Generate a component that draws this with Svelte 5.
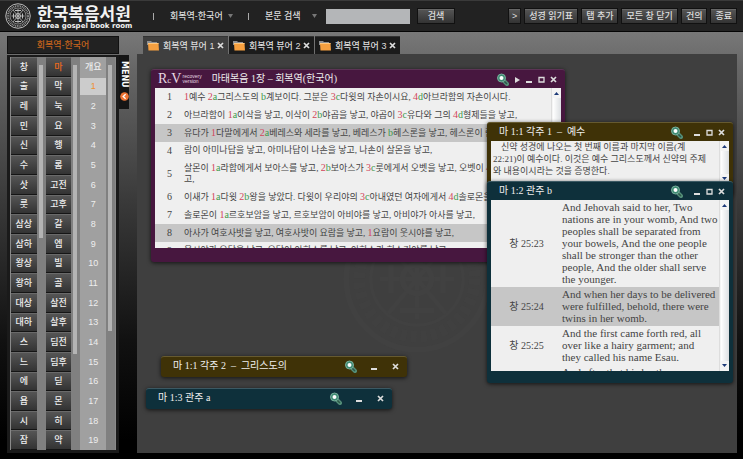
<script>
	const bibles = ['회복역-한국어'];
	const oldBooks = ['창', '출', '레', '민', '신', '수', '삿', '룻', '삼상', '삼하', '왕상', '왕하', '대상', '대하', '스', '느', '에', '욥', '시', '잠'];
	const newBooks = ['마', '막', '눅', '요', '행', '롬', '고전', '고후', '갈', '엡', '빌', '골', '살전', '살후', '딤전', '딤후', '딛', '몬', '히', '약'];
	const chapters = ['개요', ...Array.from({ length: 19 }, (_, i) => String(i + 1))];
	const actions = ['>', '성경 읽기표', '탭 추가', '모든 창 닫기', '건의', '종료'];

	const verses = [
		'1예수 2a그리스도의 b계보이다. 그분은 3c다윗의 자손이시요, 4d아브라함의 자손이시다.',
		'아브라함이 1a이삭을 낳고, 이삭이 2b야곱을 낳고, 야곱이 3c유다와 그의 4d형제들을 낳고,',
		'유다가 1다말에게서 2a베레스와 세라를 낳고, 베레스가 b헤스론을 낳고, 헤스론이 람을 낳고,',
		'람이 아미나답을 낳고, 아미나답이 나손을 낳고, 나손이 살몬을 낳고,',
		'살몬이 1a라합에게서 보아스를 낳고, 2b보아스가 3c룻에게서 오벳을 낳고, 오벳이 4d이새를 낳고,',
		'이새가 1a다윗 2b왕을 낳았다. 다윗이 우리야의 3c아내였던 여자에게서 4d솔로몬을',
		'솔로몬이 1a르호보암을 낳고, 르호보암이 아비야를 낳고, 아비야가 아사를 낳고,',
		'아사가 여호사밧을 낳고, 여호사밧이 요람을 낳고, 1요람이 웃시야를 낳고,',
		'웃시야가 요담을 낳고, 요담이 아하스를 낳고, 아하스가 히스기야를 낳고,'
	];
	const refs = [
		['창 25:23', 'And Jehovah said to her, Two nations are in your womb, And two peoples shall be separated from your bowels, And the one people shall be stronger than the other people, And the older shall serve the younger.'],
		['창 25:24', 'And when her days to be delivered were fulfilled, behold, there were twins in her womb.'],
		['창 25:25', 'And the first came forth red, all over like a hairy garment; and they\u00a0called his name Esau.'],
		['', 'And after that his brother came forth']
	];

	let tabs = $state(['회복역 뷰어 1', '회복역 뷰어 2', '회복역 뷰어 3']);
	let activeTab = $state(0);
	let book = $state('마');
	let chapter = $state('1');
	let keyword = $state('');

	// places on the desktop; h is left out for rolled-up windows
	let windows = $state([
		{ id: 'bible', tone: 'purple', title: '마태복음 1장 – 회복역(한국어)', x: 14, y: 15, w: 414, h: 193 },
		{ id: 'note', tone: 'olive', title: '마 1:1 각주 1  –  예수', x: 350, y: 68, w: 246, h: 74 },
		{ id: 'cross', tone: 'teal', title: '마 1:2 관주 b', x: 350, y: 127, w: 246, h: 202 },
		{ id: 'note2', tone: 'olive', title: '마 1:1 각주 2  –  그리스도의', x: 24, y: 302, w: 246 },
		{ id: 'cross2', tone: 'teal', title: '마 1:3 관주 a', x: 9, y: 334, w: 246 }
	]);

	function closeTab(i) {
		tabs.splice(i, 1);
		activeTab = 0;
	}
	function closeWindow(id) {
		windows = windows.filter((w) => w.id !== id);
	}
	function marks(text) {
		return text.split(/(\d|[a-d])/);
	}
</script>

{#snippet cross()}
	<svg width="7" height="7" viewBox="0 0 7 7"><path d="M1 1l5 5M6 1l-5 5" stroke="currentColor" stroke-width="1.7" /></svg>
{/snippet}

{#snippet seal(size)}
	<svg width={size} height={size} viewBox="0 0 52 52" fill="none" stroke="currentColor" aria-hidden="true">
		<circle cx="26" cy="26" r="24.5" stroke-width="2" />
		<circle cx="26" cy="26" r="20" stroke-width="4" stroke-dasharray="2 1.5" opacity="0.7" />
		<circle cx="26" cy="26" r="16" stroke-width="1.2" />
		<path d="M16 14l20 24M36 14L16 38M26 12v28M13 26h26" stroke-width="1.6" />
		<circle cx="26" cy="26" r="5" stroke-width="2" />
		<path d="M17 21v10M35 21v10M20 15h12M20 37h12" stroke-width="2" />
	</svg>
{/snippet}

{#snippet scrollbar()}
	<div class="scroll">
		<svg width="5" height="3" viewBox="0 0 5 3"><path d="M0 3L2.5 0 5 3z" fill="#1d3a78" /></svg>
		<span class="thumb"></span>
		<svg width="5" height="3" viewBox="0 0 5 3"><path d="M0 0L2.5 3 5 0z" fill="#1d3a78" /></svg>
	</div>
{/snippet}

<div class="app">
	<header>
		<a class="logo" href="/">
			{@render seal(26)}
			<span class="name">
				<strong>한국복음서원</strong>
				<small>korea gospel book room</small>
			</span>
		</a>
		<i class="sep"></i>
		<label class="pick">
			<select aria-label="역본">
				{#each bibles as b}<option>{b}</option>{/each}
			</select>
			<svg width="5" height="4" viewBox="0 0 5 4"><path d="M0 0h5L2.5 4z" fill="#777" /></svg>
		</label>
		<i class="sep"></i>
		<form onsubmit={(e) => e.preventDefault()}>
			<label class="pick wide">
				<select aria-label="검색 종류"><option>본문 검색</option></select>
				<svg width="5" height="4" viewBox="0 0 5 4"><path d="M0 0h5L2.5 4z" fill="#777" /></svg>
			</label>
			<input type="text" aria-label="검색어" bind:value={keyword} />
			<button class="btn search">검색</button>
		</form>
		<nav>
			{#each actions as a}<button class="btn">{a}</button>{/each}
		</nav>
	</header>

	<main>
		<aside>
			<h2>회복역-한국어</h2>
			<div class="books">
				<div class="col">
					{#each oldBooks as b}
						<button class:on={book === b} onclick={() => (book = b)}>{b}</button>
					{/each}
				</div>
				<div class="track"><span class="short"></span></div>
				<div class="col">
					{#each newBooks as b}
						<button class:on={book === b} onclick={() => (book = b)}>{b}</button>
					{/each}
				</div>
				<div class="track"><span class="long"></span></div>
				<div class="col nums">
					{#each chapters as c}
						<button class:on={chapter === c} onclick={() => (chapter = c)}>{c}</button>
					{/each}
				</div>
				<div class="track"><span class="mid"></span></div>
			</div>
		</aside>
		<button class="menu">
			<span>MENU</span>
			<svg width="9" height="9" viewBox="0 0 9 9">
				<circle cx="4.5" cy="4.5" r="4.3" fill="#ee7434" />
				<path d="M5.6 2.3L3.2 4.5l2.4 2.2" fill="none" stroke="#fff" stroke-width="1.3" />
			</svg>
		</button>

		<div class="work">
			<div class="tabs">
				{#each tabs as t, i}
					<div class="tab" class:active={activeTab === i}>
						<button class="pickTab" onclick={() => (activeTab = i)}>
							<svg width="12" height="11" viewBox="0 0 12 11">
								<path d="M0 1h4l1 1h5v3H0z" fill="#8d8f92" />
								<path d="M1 3h10.500l.5 7.500H1.500z" fill="#f6a040" />
								<path d="M1 3.500h10.500" stroke="#ffc77d" />
							</svg>
							{t}
						</button>
						<button class="x" aria-label="탭 닫기" onclick={() => closeTab(i)}>{@render cross()}</button>
					</div>
				{/each}
			</div>

			<div class="desktop">
				<div class="mark">{@render seal(150)}</div>
				{#each windows as w (w.id)}
					<section
						class="win {w.tone}"
						class:rolled={!w.h}
						style:left="{w.x}px"
						style:top="{w.y}px"
						style:width="{w.w}px"
						style:height={w.h ? w.h + 'px' : null}
					>
						<div class="bar">
							{#if w.id === 'bible'}
								<span class="rcv"><b>R<i>c</i>V</b><small>recovery<br />version</small></span>
							{/if}
							<h3>{w.title}</h3>
							<button class="glass" aria-label="검색">
								<svg width="13" height="13" viewBox="0 0 13 13">
									<path d="M7 7l4 4" stroke="#55907a" stroke-width="4" stroke-linecap="round" />
									<path d="M8 8l3 3" stroke="#2c5748" stroke-width="1.5" />
									<circle cx="5.500" cy="5" r="4" fill="#3d8a72" stroke="#78ad9b" />
									<circle cx="5.500" cy="5" r="2" fill="#fff" />
								</svg>
							</button>
							{#if w.id === 'bible'}
								<button aria-label="다음">
									<svg width="7" height="7" viewBox="0 0 7 7"><path d="M1 1l5 3-5 3z" fill="currentColor" /></svg>
								</button>
							{/if}
							<button aria-label="최소화">
								<svg width="7" height="7" viewBox="0 0 7 7"><path d="M0 6h6" stroke="currentColor" stroke-width="2" /></svg>
							</button>
							{#if w.h}
								<button aria-label="최대화">
									<svg width="7" height="7" viewBox="0 0 7 7"><path d="M1 1.500h5v4.500H1z" fill="none" stroke="currentColor" stroke-width="1.300" /></svg>
								</button>
							{/if}
							<button aria-label="닫기" onclick={() => closeWindow(w.id)}>{@render cross()}</button>
						</div>

						{#if w.id === 'bible'}
							<div class="body">
								<div class="text">
									<table class="verses">
										<tbody>
											{#each verses as v, i}
												<tr class:hit={i === 2 || i === 7}>
													<th>{i + 1}</th>
													<td>{#each marks(v) as p, n}{#if n % 2}<a href="#note" class:num={p < 'a'}>{p}</a>{:else}{p}{/if}{/each}</td>
												</tr>
											{/each}
										</tbody>
									</table>
								</div>
								{@render scrollbar()}
							</div>
						{:else if w.id === 'note'}
							<div class="body">
								<p class="text">신약 성경에 나오는 첫 번째 이름과 마지막 이름(계 22:21)이 예수이다. 이것은 예수 그리스도께서 신약의 주제와 내용이시라는 것을 증명한다.</p>
								{@render scrollbar()}
							</div>
						{:else if w.id === 'cross'}
							<div class="body">
								<div class="text">
									<table class="refs">
										<tbody>
											{#each refs as [ref, text], i}
												<tr class:hit={i === 1}>
													<th>{ref}</th>
													<td>{text}</td>
												</tr>
											{/each}
										</tbody>
									</table>
								</div>
								{@render scrollbar()}
							</div>
						{/if}
					</section>
				{/each}
			</div>
		</div>
	</main>
</div>

<style>
	:global(body) {
		margin: 0;
		background: #000;
	}
	.app {
		display: flex;
		flex-direction: column;
		min-height: 100vh;
		font: 9px/12px 'Liberation Sans', 'Noto Sans CJK KR', sans-serif;
		color: #ddd;
		background: linear-gradient(#787878 32px, #666 70px, #3a3a3a 200px, #111 340px, #000 440px);
	}
	* {
		box-sizing: border-box;
	}
	button,
	select,
	input {
		font: inherit;
		color: inherit;
		border: 0;
		margin: 0;
		padding: 0;
		background: none;
		border-radius: 0;
	}
	button {
		cursor: pointer;
		white-space: nowrap;
	}
	svg {
		display: block;
		flex: none;
	}
	header {
		display: flex;
		align-items: center;
		height: 32px;
		padding: 0 6px 0 5px;
		background: #222;
		border-top: 1px solid #3a3a3a;
		border-bottom: 1px solid #050505;
	}
	.logo {
		display: flex;
		align-items: center;
		gap: 6px;
		width: 148px;
		color: #bdbdbd;
		text-decoration: none;
	}
	.name {
		display: flex;
		flex-direction: column;
		padding-top: 3px;
		white-space: nowrap;
		color: #f2f2f2;
	}
	.name strong {
		font-size: 17px;
		line-height: 17px;
		font-weight: 700;
	}
	.name small {
		font: bold 7px/7px 'DejaVu Sans', sans-serif;
	}
	.sep {
		width: 1px;
		height: 7px;
		background: #aaa;
	}
	.pick {
		display: flex;
		align-items: center;
		gap: 5px;
		margin: 0 15px 0 16px;
	}
	.pick.wide {
		gap: 11px;
		margin-right: 9px;
	}
	.pick select {
		appearance: none;
		font-weight: 500;
	}
	form {
		display: flex;
		align-items: center;
	}
	form input {
		width: 84px;
		height: 15px;
		padding: 0 3px;
		background: #b4b6b8;
		color: #222;
	}
	.btn {
		height: 16px;
		padding: 0 4px;
		font-weight: 500;
		background: linear-gradient(#565656, #333);
		border: 1px solid #111;
		box-shadow: inset 0 1px #666;
	}
	.btn.search {
		width: 38px;
		margin-left: 7px;
	}
	nav {
		display: flex;
		gap: 3px;
		margin-left: auto;
	}
	nav .btn:first-child {
		padding: 0 3px;
	}
	main {
		display: flex;
		flex: 1;
		align-items: flex-start;
		padding: 4px 6px 6px 7px;
	}
	aside,
	.work {
		display: flex;
		flex-direction: column;
		align-self: stretch;
	}
	aside {
		width: 112px;
	}
	h2 {
		margin: 0 0 1px;
		font-size: 9px;
		line-height: 16px;
		font-weight: 500;
		text-align: center;
		color: #c4631c;
		background: #222;
		border: 1px solid #111;
	}
	.books {
		display: flex;
		flex: 1;
		padding: 0 1px;
		background: #8a8a8a;
		border: solid #1a1a1a;
		border-width: 2px 3px 3px;
	}
	.col {
		display: flex;
		flex-direction: column;
		flex: 1;
	}
	.col button {
		flex: 1;
		min-height: 19px;
		font-weight: 500;
		background: linear-gradient(#555, #333);
		border-top: 1px solid #6a6a6a;
		border-bottom: 1px solid #151515;
		color: #eee;
	}
	.col .on {
		color: #ee6a1c;
	}
	.nums button {
		background: #a0a0a0;
		border-color: #a0a0a0;
	}
	.nums .on {
		background: #ccc;
		color: #f09030;
	}
	.track {
		width: 9px;
		padding: 8px 3px 0 2px;
		background: #808080;
	}
	.track span {
		display: block;
		background: #b4b4b4;
	}
	.short {
		height: 45%;
	}
	.long {
		height: 75%;
	}
	.mid {
		height: 69%;
	}
	.menu {
		display: flex;
		flex-direction: column;
		align-items: center;
		justify-content: space-between;
		width: 10px;
		height: 54px;
		margin: 19px 8px 0 0;
		padding: 6px 0 8px;
		background: #151515;
		color: #fff;
	}
	.menu span {
		writing-mode: vertical-rl;
		font: bold 8px/10px 'DejaVu Sans', sans-serif;
	}
	.work {
		flex: 1;
		min-width: 0;
	}
	.tabs {
		display: flex;
		gap: 1px;
		padding-left: 6px;
	}
	.tab {
		display: flex;
		align-items: center;
		justify-content: space-between;
		width: 85px;
		height: 18px;
		padding: 0 4px;
		background: #1b1b1b;
		border-top: 1px solid #333;
	}
	.tab.active {
		background: #3f3f3f;
	}
	.pickTab {
		display: flex;
		align-items: center;
		gap: 4px;
		font-weight: 500;
	}
	.desktop {
		position: relative;
		flex: 1;
		min-height: 399px;
		overflow: hidden;
		background: #3f3f3f;
	}
	.mark {
		position: absolute;
		left: 205px;
		top: 150px;
		color: #414141;
	}
	.win {
		position: absolute;
		display: flex;
		flex-direction: column;
		padding: 0 4px 12px;
		border-radius: 3px;
		border-top: 1px solid;
		box-shadow: 0 1px 4px rgba(0, 0, 0, 0.7);
		font-family: 'Liberation Serif', 'Noto Sans CJK KR', serif;
	}
	.win.rolled {
		padding-bottom: 2px;
	}
	.win.purple {
		padding-bottom: 14px;
	}
	.purple {
		background: #47173f;
		border-color: #5c3355;
	}
	.olive {
		background: #3f3207;
		border-color: #665a30;
	}
	.teal {
		background: #0e303b;
		border-color: #3c5963;
	}
	.bar {
		display: flex;
		align-items: center;
		gap: 5px;
		height: 18px;
		padding: 0 4px 0 8px;
		flex: none;
	}
	.purple .bar {
		padding-left: 3px;
	}
	.win:not(.purple, .rolled) .glass {
		margin-right: 6px;
	}
	.rolled .bar {
		gap: 14px;
	}
	h3 {
		flex: 1;
		margin: 0;
		font-size: 10px;
		font-weight: 400;
		white-space: pre;
		color: #eee;
	}
	.rcv {
		display: flex;
		align-items: center;
		gap: 1px;
		margin-right: 5px;
		color: #e5d8e2;
	}
	.rcv b {
		font-size: 14px;
		font-weight: 400;
	}
	.rcv i {
		font-size: 9px;
		font-style: normal;
	}
	.rcv small {
		font: 5px/5px 'Liberation Sans', sans-serif;
	}
	.body {
		display: flex;
		flex: 1;
		min-height: 0;
		overflow: hidden;
		background: #efefef;
		color: #444;
	}
	.text {
		flex: 1;
		margin: 0;
		overflow: hidden;
	}
	p.text {
		padding: 0 10px 0 2px;
		text-indent: 8px;
	}
	.scroll {
		display: flex;
		flex-direction: column;
		align-items: center;
		width: 10px;
		padding: 4px 0;
		background: #f4f4f4;
		border-left: 1px solid #ddd;
	}
	.thumb {
		width: 8px;
		flex: 1;
		margin: 3px 0;
		background: linear-gradient(90deg, #fff, #dcdfe2);
	}
	table {
		width: 100%;
		border-collapse: collapse;
	}
	th {
		padding: 0;
		font-weight: 400;
	}
	.hit {
		background: #c6c6c6;
	}
	.verses th {
		width: 29px;
		font-size: 10px;
	}
	.verses td {
		padding: 3px 16px 3px 0;
		line-height: 11px;
		word-break: break-all;
	}
	.refs th {
		width: 71px;
		font-size: 10px;
	}
	.refs td {
		padding: 1px 0 2px;
		font-size: 11px;
	}
	.verses a {
		color: #3f9a4c;
		text-decoration: none;
		font-size: 10px;
	}
	.verses .num {
		color: #d2455c;
	}
</style>
